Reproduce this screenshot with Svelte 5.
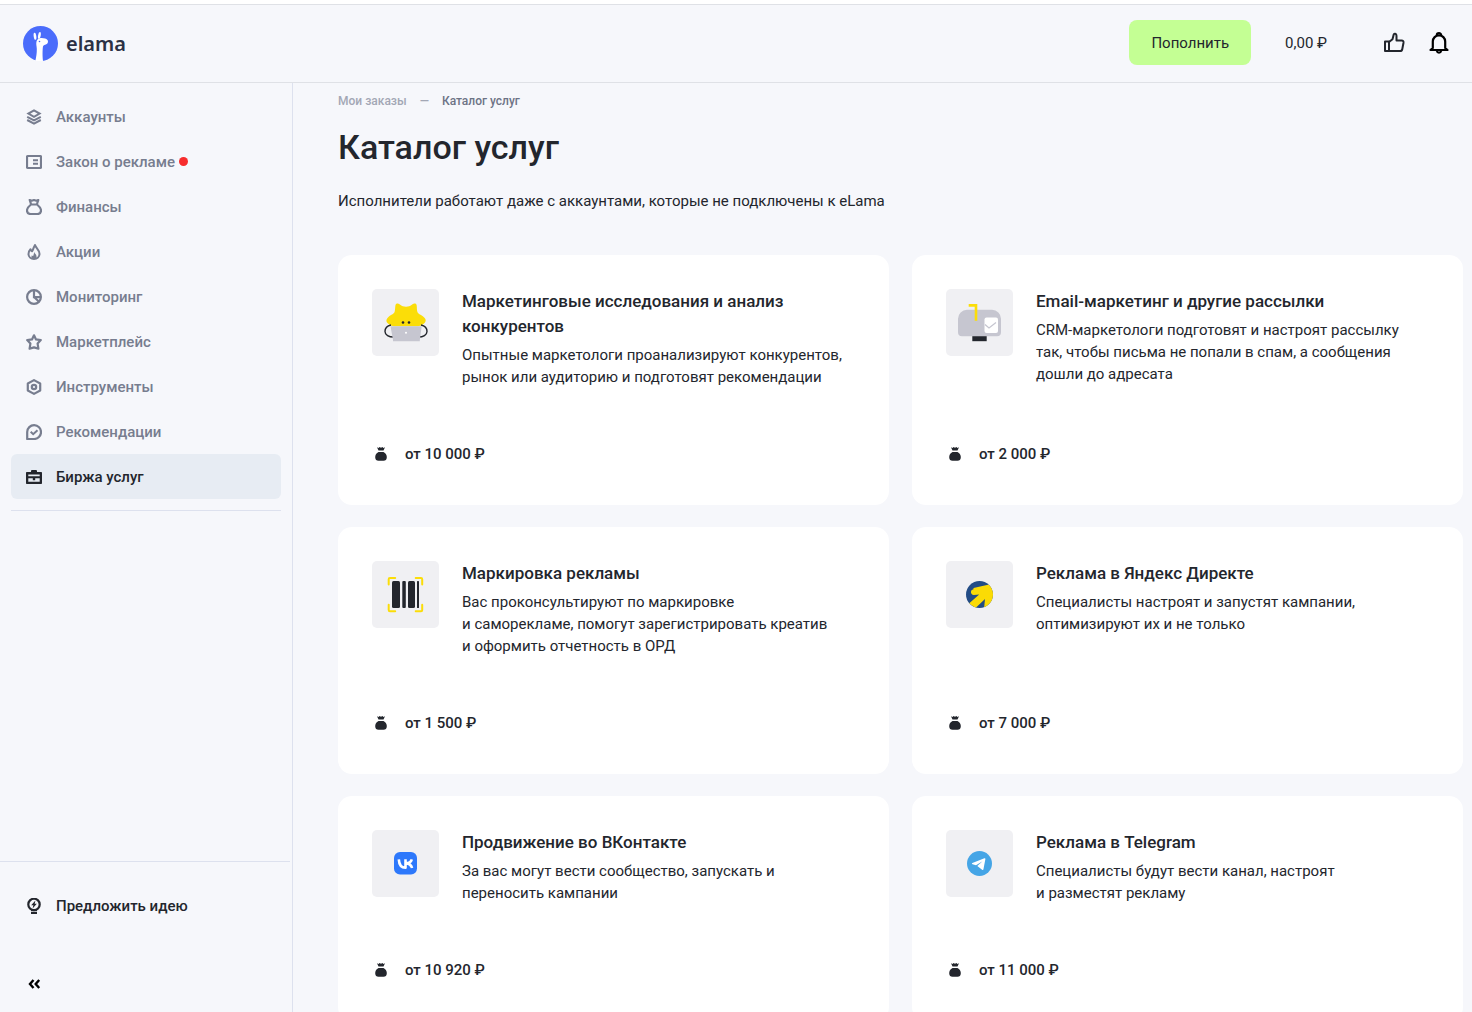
<div class="app">
	<header class="topbar">
		<a class="logo" href="/">
			<svg width="35" height="35" viewBox="0 0 35 35" aria-hidden="true">
				<circle cx="17.5" cy="17.5" r="17.5" fill="#4a6cfb" />
				<path
					fill="#fff"
					d="M12.3 35c1-4 1.600-8 1.500-12-.1-3-.9-5.400-.3-7.500.5-1.800 1.800-3 3.400-3.300 1.700-.3 3.700-.1 5.300.4 1.700.5 2.900 1.600 2.800 3.200-.1 1.500-1.200 2.600-2.800 3-1.200.3-2.100.9-2.300 2.200-.4 3-.5 9 .1 13.900z"
				/>
				<ellipse cx="12" cy="10.300" rx="1.300" ry="3.600" fill="#fff" transform="rotate(-8 12 10.300)" />
				<ellipse cx="16.400" cy="9.500" rx="1.300" ry="3.500" fill="#fff" transform="rotate(10 16.400 9.500)" />
				<circle cx="16.500" cy="15.500" r=".8" fill="#4a6cfb" />
			</svg>
			<span>elama</span>
		</a>

		<div class="actions">
			<button class="topup" type="button">Пополнить</button>
			<span class="balance">0,00 ₽</span>
			<button class="icon-btn thumb" type="button" aria-label="Оценить">
				<svg width="22" height="22" viewBox="0 0 22 22" fill="none" stroke="#23262d" stroke-width="2" stroke-linejoin="round">
					<path d="M2 9.500h4V19H2z" />
					<path d="M6 10l3.500-2.800 1.200-4.700c.3-1.200 2.800-1.200 2.800 1.200v4.800h5.200c1.300 0 2 1 1.800 2.200L19.300 17c-.2 1.200-1 2-2.300 2H6z" />
				</svg>
			</button>
			<button class="icon-btn" type="button" aria-label="Уведомления">
				<svg width="20" height="24" viewBox="0 0 20 24" fill="none" stroke="#000" stroke-width="2.200" stroke-linejoin="round">
					<path d="M3.800 17v-6.500a6.200 6.200 0 0 1 12.400 0V17l2.300 2h-17z" />
					<path d="M7.800 4.300a2.200 2.200 0 1 1 4.400 0M7.800 20a2.300 2.300 0 0 0 4.400 0" />
				</svg>
			</button>
		</div>
	</header>

	<div class="layout">
		<aside class="sidebar">
			<nav class="menu">
				{#each menu as item (item.icon)}
					<a class="item" class:active={item.active} href="#{item.icon}">
						{@render navIcon(item.icon)}
						<span>{item.label}</span>
						{#if item.dot}<i class="dot"></i>{/if}
					</a>
				{/each}
			</nav>

			<div class="bottom">
				<a class="item idea" href="#idea">
					{@render navIcon('idea')}
					<span>Предложить идею</span>
				</a>
				<button class="item collapse" type="button" aria-label="Свернуть меню">
					{@render navIcon('collapse')}
				</button>
			</div>
		</aside>

		<main class="content">
			<div class="crumbs">
				<a href="#orders">Мои заказы</a>
				<span class="sep">—</span>
				<span>Каталог услуг</span>
			</div>
			<h1>Каталог услуг</h1>
			<p class="intro">Исполнители работают даже с аккаунтами, которые не подключены к eLama</p>

			<div class="cards">
				{#each services as service (service.icon)}
					<article class="card">
						<div class="info">
							<div class="tile">{@render picture(service.icon)}</div>
							<div class="text">
								<h2>{service.title}</h2>
								<p>{service.text}</p>
							</div>
						</div>
						<div class="price">
							<svg width="18" height="16" viewBox="0 0 18 16" fill="#23262d" aria-hidden="true">
								<path d="M5 1.200l1.600.7L7.500 1l1.500.8 1.500-.8.9.9 1.600-.7-1.500 3.300h-5z" />
								<path d="M6.500 6h5c2 1 3.300 2.800 3.300 5 0 2.700-1.300 3.800-3.300 3.800h-5c-2 0-3.300-1.100-3.300-3.800 0-2.200 1.300-4 3.300-5z" />
							</svg>
							<span>от {service.price} ₽</span>
						</div>
					</article>
				{/each}
			</div>
		</main>
	</div>
</div>

{#snippet navIcon(name)}
	<svg class="nav-icon" width="16" height="16" viewBox="0 0 16 16" fill="none" stroke="currentColor" stroke-width="2.200" aria-hidden="true">
		{#if name === 'accounts'}
			<path stroke-width="2" d="M8 1.400l5.600 3.200L8 7.800 2.400 4.600z" />
			<path stroke-width="2" d="M1.200 7.800L8 11.400l6.800-3.600M1.200 11L8 14.700l6.800-3.700" />
		{:else if name === 'law'}
			<rect x="1" y="2" width="14" height="12" rx=".6" />
			<path stroke-width="2" d="M7 6.300h5M7 9.700h5" />
		{:else if name === 'finance'}
			<path stroke-linejoin="round" d="M5 5.500h6c2.500 2 4 3.800 4 6 0 2.600-1.600 3.500-3.500 3.500h-7C2.600 15 1 14.100 1 11.500c0-2.200 1.500-4 4-6zM5 5L3.700 1l2 .7L8 1l2.300.7 2-.7L11 5" />
		{:else if name === 'promo'}
			<path stroke-linejoin="round" stroke-width="2" d="M9 1c.5 2.500 4.500 4.800 4.500 8.800 0 3.200-2.300 5.200-5.500 5.200s-5.500-2-5.500-5C2.500 8 3.300 6.500 4.500 5.300c.3 1 .7 1.700 1.500 2C7.500 5.500 7.500 3 9 1z" />
			<path fill="currentColor" stroke="none" d="M8.200 8c.5 1.700 2.300 2.500 2.300 4v2h-5v-2.600l1.600.6c.7-1.300.8-2.500 1.100-4z" />
		{:else if name === 'monitoring'}
			<circle cx="8" cy="8" r="6.900" />
			<path d="M8 1v7.200h7M8 8l4.800 4.500" />
		{:else if name === 'market'}
			<path stroke-linejoin="round" d="M8 1.300l2 4.100 4.800.7-3.200 3.500.8 5-4.400-1.200-4.400 1.200.8-5L1.200 6.100 6 5.400z" />
		{:else if name === 'tools'}
			<path stroke-linejoin="round" d="M8 1.100l6.200 3.400v7L8 14.900l-6.200-3.400v-7z" />
			<circle cx="8" cy="8" r="2.200" />
		{:else if name === 'advice'}
			<path stroke-linejoin="round" d="M1.200 15V8A6.900 6.900 0 1 1 8 15z" />
			<path stroke-width="2" d="M4.700 7.700l2.500 2.500 4.300-4" />
		{:else if name === 'exchange'}
			<path fill="currentColor" stroke="none" fill-rule="evenodd" d="M5 3V2.200C5 1.500 5.500 1 6.200 1h3.600c.7 0 1.200.5 1.200 1.200V3h4c.6 0 1 .4 1 1v10c0 .6-.4 1-1 1H1c-.6 0-1-.4-1-1V4c0-.6.4-1 1-1zM2.300 5.500v1.700h11.400V5.500zM2.300 9.300v3.400h11.400V9.300H9.200v1.900H6.800V9.300z" />
		{:else if name === 'idea'}
			<circle cx="8" cy="6.400" r="5.700" />
			<path fill="currentColor" stroke="none" d="M5 11h6v2.300H5zM5 14.100h6V16H5zM9.400 2.500L5.200 7.200h2.200l-.8 3.300 4.200-4.700H8.700z" />
		{:else if name === 'collapse'}
			<path stroke="#000" stroke-width="2.400" d="M7.500 4L4 8l3.500 4M13.200 4L9.700 8l3.500 4" />
		{/if}
	</svg>
{/snippet}

{#snippet picture(name)}
	<svg width="67" height="67" viewBox="0 0 67 67" fill="none" aria-hidden="true">
		{#if name === 'research'}
			<path fill="#fbdd08" d="M23.500 16c.8-1.800 2.500-1.800 4-.8 2.500 1.800 4 2.500 6.500 2.500s4-.7 6.500-2.500c1.500-1 3.500-1 4.100.8.500 2 0 5 .9 7.200.6 1.600 3 2.400 5 3.800 2.500 1.700 4.300 4 2.500 6.500-1.500 2-4 3.300-7 3.800H22c-3-.5-5.500-1.800-7-3.800-1.500-2.400.3-4.700 2.500-6.500 2-1.500 4.300-2.200 5-3.800.8-2.200.5-5.200 1-7.200z" />
			<path stroke="#23262d" stroke-width="1.400" d="M19 36c-4 .8-6 3.500-6 6.500 0 3.500 4 5.500 8.500 5.500M49 36c4 .8 6 3.500 6 6.500 0 3.500-4 5.500-8.500 5.500" />
			<path fill="#c6c6d0" d="M18.500 37.300h31.200L47.800 51v1.300H21V51z" />
			<circle cx="31" cy="33.500" r="1.300" fill="#23262d" />
			<circle cx="37" cy="33.500" r="1.300" fill="#23262d" />
			<circle cx="34" cy="43.800" r="1" fill="#fff" />
		{:else if name === 'email'}
			<path fill="#23262d" d="M26.300 46h14.400v6.200H26.300z" />
			<path fill="#c6c6d0" d="M21 20.800h25a9 9 0 0 1 9 9v13.400a4 4 0 0 1-4 4H16a4 4 0 0 1-4-4V29.800a9 9 0 0 1 9-9z" />
			<path fill="#fbdd08" d="M22.700 15h8.600v16.700h-2.600v-14h-6z" />
			<rect x="38.500" y="28.500" width="13.500" height="15.500" rx="2" fill="#fff" />
			<path stroke="#c6c6d0" stroke-width="1.200" d="M39 35.500l4 3.500 7-5.500" />
		{:else if name === 'marking'}
			<path stroke="#fbdd08" stroke-width="2" stroke-linecap="round" d="M16.700 23.500v-5.300c0-.8.4-1.200 1.200-1.200h5.300M43.700 17H49c.8 0 1.200.4 1.200 1.200v5.300M50.200 43.700V49c0 .8-.4 1.200-1.200 1.200h-5.300M23.200 50.200h-5.300c-.8 0-1.200-.4-1.200-1.200v-5.300" />
			<g fill="#23262d">
				<rect x="20" y="20" width="8" height="27" rx="1.500" />
				<rect x="30.300" y="20" width="3.500" height="27" rx="1" />
				<rect x="36" y="20" width="7" height="27" rx="1.500" />
				<rect x="45" y="20" width="2" height="27" rx=".6" />
			</g>
		{:else if name === 'direct'}
			<clipPath id="direct-clip"><circle cx="33.500" cy="33.500" r="13.500" /></clipPath>
			<g clip-path="url(#direct-clip)">
				<path fill="#234c85" d="M20 20h27v27H20z" />
				<path fill="#fbdb05" d="M27.500 27L42 23.800l6-1V40l-7 7-2.800-1 .8-8-9.500 9-6.500-4.500 10.200-9-5.200.6c-3.500.3-4.500-5.200-.5-5.900z" />
			</g>
		{:else if name === 'vk'}
			<rect x="22" y="22" width="23" height="22.500" rx="6" fill="#2d78fb" />
			<path stroke="#fff" stroke-width="2.600" stroke-linejoin="round" d="M26.800 29.300c.3 5 2.600 8.400 6.700 8.400v-8.400M39.800 29.300c-.6 2.200-2.400 3.900-5.800 4.100 3.400.2 5.300 1.900 6.100 4.600" />
		{:else if name === 'telegram'}
			<circle cx="33.500" cy="33.500" r="12.500" fill="#45a5e6" />
			<path fill="#fff" d="M26.400 33.100l12-4.900c.6-.2 1.100.1 1 .9l-1.900 10c-.1.900-.7 1.100-1.400.6L31.300 36l5.200-4.700-6.500 4-3.500-1.100c-.8-.3-.8-.8-.1-1.100z" />
		{/if}
	</svg>
{/snippet}

<script>
	const menu = [
		{ icon: 'accounts', label: 'Аккаунты' },
		{ icon: 'law', label: 'Закон о рекламе', dot: true },
		{ icon: 'finance', label: 'Финансы' },
		{ icon: 'promo', label: 'Акции' },
		{ icon: 'monitoring', label: 'Мониторинг' },
		{ icon: 'market', label: 'Маркетплейс' },
		{ icon: 'tools', label: 'Инструменты' },
		{ icon: 'advice', label: 'Рекомендации' },
		{ icon: 'exchange', label: 'Биржа услуг', active: true }
	];

	const services = [
		{
			icon: 'research',
			title: 'Маркетинговые исследования и анализ конкурентов',
			text: 'Опытные маркетологи проанализируют конкурентов, рынок или аудиторию и подготовят рекомендации',
			price: '10 000'
		},
		{
			icon: 'email',
			title: 'Email-маркетинг и другие рассылки',
			text: 'CRM-маркетологи подготовят и настроят рассылку так,\u00a0чтобы письма не попали в спам, а сообщения дошли\u00a0до адресата',
			price: '2 000'
		},
		{
			icon: 'marking',
			title: 'Маркировка рекламы',
			text: 'Вас проконсультируют по маркировке и\u00a0саморекламе, помогут зарегистрировать креатив и\u00a0оформить отчетность в ОРД',
			price: '1 500'
		},
		{
			icon: 'direct',
			title: 'Реклама в Яндекс Директе',
			text: 'Специалисты настроят и запустят кампании, оптимизируют их и не только',
			price: '7 000'
		},
		{
			icon: 'vk',
			title: 'Продвижение во ВКонтакте',
			text: 'За вас могут вести сообщество, запускать и переносить кампании',
			price: '10 920'
		},
		{
			icon: 'telegram',
			title: 'Реклама в Telegram',
			text: 'Специалисты будут вести канал, настроят и\u00a0разместят рекламу',
			price: '11 000'
		}
	];
</script>

<style>
	:global(body) {
		background: #fff;
		color: #23262d;
		font-family: Roboto, 'Liberation Sans', sans-serif;
		font-size: 15px;
		line-height: 22px;
	}

	.app {
		display: flex;
		flex-direction: column;
		box-sizing: border-box;
		height: 100vh;
		padding-top: 4px;
		overflow: hidden;
	}

	a {
		color: inherit;
		text-decoration: none;
	}

	button {
		padding: 0;
		border: 0;
		background: none;
		color: inherit;
		font: inherit;
		cursor: pointer;
	}

	h1,
	h2,
	p {
		margin: 0;
	}

	.topbar {
		display: flex;
		flex: none;
		align-items: center;
		justify-content: space-between;
		box-sizing: border-box;
		height: 79px;
		padding: 0 23px;
		border-top: 1px solid #dfe1e6;
		border-bottom: 1px solid #dfe1e6;
		background: #f6f7fb;
	}

	.logo {
		display: flex;
		align-items: center;
		gap: 8px;
		color: #2b3044;
		font-family: 'Noto Sans', sans-serif;
		font-size: 20px;
		font-weight: 600;
		line-height: 20px;
	}

	.actions {
		display: flex;
		align-items: center;
		padding-bottom: 2px;
	}

	.topup {
		height: 45px;
		padding: 0 22px;
		border-radius: 8px;
		background: #c4ff94;
	}

	.balance {
		margin: 0 56px 0 34px;
	}

	.icon-btn svg {
		display: block;
	}

	.thumb {
		margin-right: 24px;
	}

	.layout {
		display: flex;
		flex: 1;
		min-height: 0;
		background: #f6f7fb;
	}

	.sidebar {
		display: flex;
		flex: none;
		flex-direction: column;
		justify-content: space-between;
		width: 292px;
		border-right: 1px solid #dde1ee;
	}

	.menu {
		margin: 0 11px;
		padding: 11px 0;
		border-bottom: 1px solid #dde1ee;
	}

	.item {
		display: flex;
		align-items: center;
		height: 45px;
		padding: 0 15px;
		border-radius: 6px;
		color: #777d8f;
		font-weight: 500;
	}

	.item.active {
		background: #e7ecf3;
		color: #23262d;
	}

	.nav-icon {
		flex: none;
		margin-right: 14px;
	}

	.dot {
		width: 9px;
		height: 9px;
		margin-left: 4px;
		border-radius: 50%;
		background: #f72d2d;
	}

	.bottom {
		margin-right: 2px;
		padding: 21px 11px 6px;
		border-top: 1px solid #dde1ee;
	}

	.idea {
		margin-bottom: 33px;
		color: #23262d;
	}

	.content {
		flex: 1;
		min-width: 0;
		padding: 10px 9px 0 45px;
		overflow-y: auto;
		scrollbar-width: none;
	}

	.crumbs {
		display: flex;
		gap: 13px;
		color: #6d7385;
		font-size: 12px;
		font-weight: 500;
		line-height: 16px;
	}

	.crumbs a,
	.sep {
		color: #a3a7b5;
	}

	h1 {
		margin-top: 18px;
		font-size: 34px;
		font-weight: 500;
		line-height: 40px;
	}

	.intro {
		margin-top: 23px;
	}

	.cards {
		display: grid;
		grid-template-columns: 1fr 1fr;
		gap: 22px 23px;
		margin-top: 43px;
		padding-bottom: 45px;
	}

	.card {
		display: flex;
		flex-direction: column;
		justify-content: space-between;
		gap: 49px;
		padding: 34px;
		border-radius: 14px;
		background: #fff;
	}

	.info {
		display: flex;
		gap: 23px;
	}

	.tile {
		flex: none;
		width: 67px;
		height: 67px;
		border-radius: 5px;
		background: #f0f0f3;
	}

	.text {
		padding-right: 12px;
	}

	h2 {
		margin-bottom: 5px;
		font-size: 17px;
		font-weight: 500;
		line-height: 25px;
	}

	.price {
		display: flex;
		align-items: center;
		gap: 15px;
		height: 34px;
		font-weight: 500;
	}
</style>
